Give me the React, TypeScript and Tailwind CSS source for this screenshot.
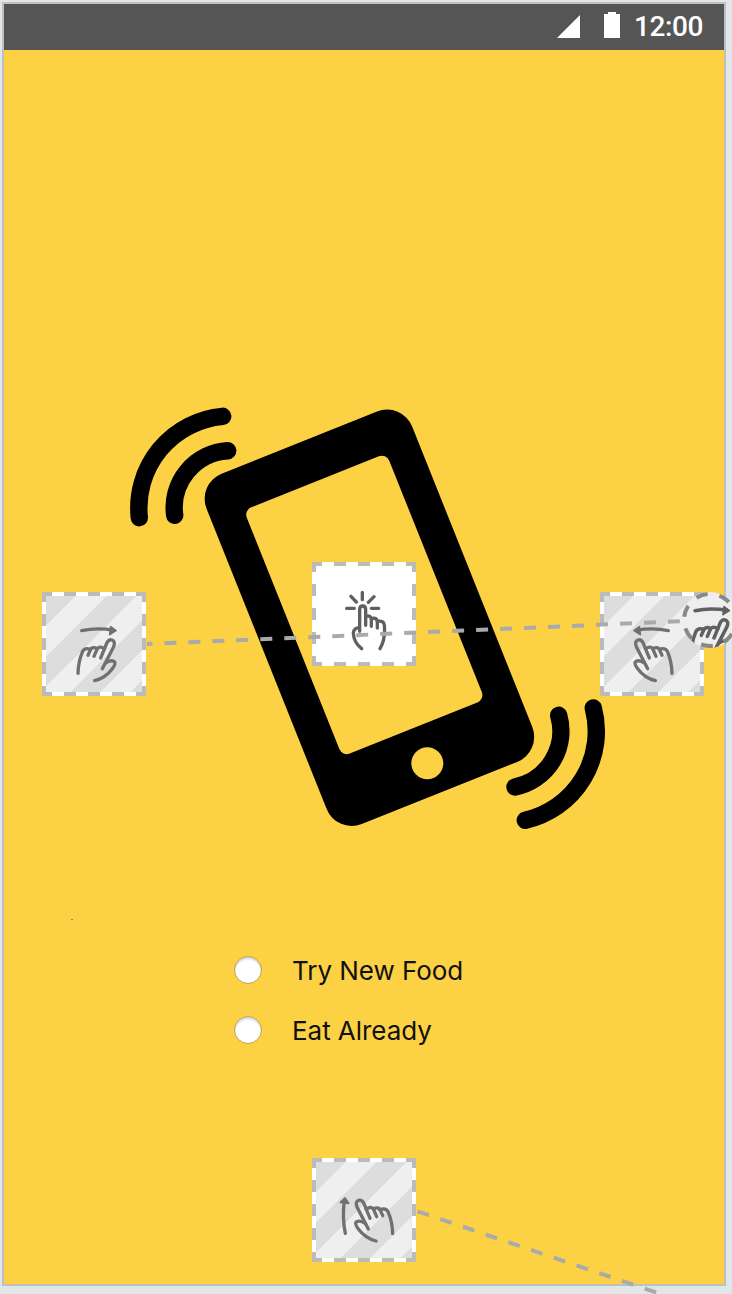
import React from "react";

function DashedBorder() {
  return (
    <svg className="absolute inset-0" width="104" height="104" fill="none">
      <path d="M0 2H104M0 102H104M2 0V104M102 0V104" stroke="#ffffff" strokeWidth="4" />
      <path
        d="M0 2H104M0 102H104M2 0V104M102 0V104"
        stroke="#bbbbbb"
        strokeWidth="4"
        strokeDasharray="12 12"
        strokeDashoffset="2"
      />
    </svg>
  );
}

function SwipeHand() {
  return (
    <g>
      <path d="M179 266L145 200Q139 184 150 180Q160 177 166 190L184 234" />
      <path d="M172 206Q190 196 195 208L204 229" />
      <path d="M194 206Q210 198 215 210L222 226" />
      <path d="M214 208Q232 202 238 214Q251 243 252 280" />
      <path d="M169 249Q154 238 143 245Q137 251 149 266Q170 294 202 302" />
    </g>
  );
}

function SwipeLeft() {
  return (
    <g>
      <path d="M241 152Q195 142 144 151" />
      <path d="M138 152L154 140L157 164Z" fill="currentColor" strokeWidth="5" />
      <SwipeHand />
    </g>
  );
}

function Hotspot({
  place,
  plain,
  children,
}: {
  place: string;
  plain?: boolean;
  children: React.ReactNode;
}) {
  return (
    <div className={"absolute h-[104px] w-[104px] p-1 " + place}>
      <div
        className={
          plain
            ? "h-24 w-24 bg-white"
            : "h-24 w-24 bg-[repeating-linear-gradient(135deg,#dddddd_0px,#dddddd_21.21px,#efefef_21.21px,#efefef_42.43px)]"
        }
      />
      <DashedBorder />
      <svg
        className="absolute inset-0 text-[#707070] blur-[0.7px]"
        width="104"
        height="104"
        fill="none"
        stroke="currentColor"
        strokeWidth="10"
        strokeLinecap="round"
        strokeLinejoin="round"
      >
        <g transform="scale(.33333) translate(-36 -36)">{children}</g>
      </svg>
    </div>
  );
}

function Choice({ label }: { label: string }) {
  return (
    <label className="flex h-[60px] items-center">
      <span className="h-7 w-7 rounded-full border border-[#b9a25a] bg-white shadow-[inset_0_2px_2px_rgba(0,0,0,0.16)]" />
      <span className="ml-[30px] whitespace-nowrap pt-0.5 text-[26px] leading-8 tracking-[-0.05px] text-[#111111]">
        {label}
      </span>
    </label>
  );
}

export default function App() {
  return (
    <div className="relative h-[1294px] w-[732px] overflow-hidden bg-[#e1e7e9] p-0.5 font-['Inter',sans-serif]">
      <div className="flex h-[1284px] w-[724px] flex-col border-2 border-[#c0c0c0] bg-[#fcd144]">
        <header className="flex h-[46px] shrink-0 items-center justify-end bg-[#555555] pr-[21px] text-white">
          <svg width="64" height="46" fill="white">
            <path d="M0 34H23V11Z" />
            <path d="M47 10H51V8H59V10H63V34H47Z" />
          </svg>
          <span className="ml-[13px] font-['Roboto',sans-serif] text-[28px] font-medium leading-[46px] tracking-[-0.4px]">
            12:00
          </span>
        </header>
        <main className="flex flex-col">
          <svg className="ml-[120px] mt-[350px]" width="490" height="440" viewBox="124 400 490 440" fill="none">
            <g transform="translate(369.4 617.8) rotate(-21.8)">
              <rect x="-110.7" y="-188.7" width="221.4" height="377.4" rx="27" fill="black" />
            </g>
            <g transform="translate(364.3 604.9) rotate(-21.8)">
              <rect x="-76.7" y="-132.6" width="153.4" height="265.2" rx="8" fill="#fcd144" />
            </g>
            <circle cx="427.3" cy="763.2" r="16" fill="#fcd144" />
            <g stroke="black" strokeWidth="17.4" strokeLinecap="round">
              <path d="M222.7 416.3A92.1 92.1 0 0 0 139.3 517.7" />
              <path d="M227.7 450.7A57 57 0 0 0 174.7 515.3" />
              <path d="M593.3 708A91.3 91.3 0 0 1 525.3 820.3" />
              <path d="M558.7 715.3A57.2 57.2 0 0 1 515 787" />
            </g>
          </svg>
          <div className="ml-[67px] mt-[79px] h-px w-0.5 bg-[#9c8748]" />
          <div className="ml-[230px] mt-[20px] flex flex-col">
            <Choice label="Try New Food" />
            <Choice label="Eat Already" />
          </div>
        </main>
      </div>

      <Hotspot place="left-[42px] top-[592px]">
        <g transform="translate(396 0) scale(-1 1)">
          <SwipeLeft />
        </g>
      </Hotspot>
      <Hotspot place="left-[312px] top-[562px]" plain>
        <g className="text-[#606060]" stroke="currentColor">
          <path d="M187 127V149M153 139L169 156M222 140L205 157M140 175H163M214 175H236" />
          <path d="M179 244V179Q179 168 188 168Q197 168 197 179V226" />
          <path d="M197 199Q212 195 214 207V229" />
          <path d="M214 206Q229 202 232 213V234" />
          <path d="M232 214Q252 211 253 225Q257 268 240 296" />
          <path d="M178 233Q162 233 160 249Q161 278 185 296" />
        </g>
      </Hotspot>
      <Hotspot place="left-[600px] top-[592px]">
        <SwipeLeft />
      </Hotspot>
      <Hotspot place="left-[312px] top-[1158px]">
        <path d="M136 262Q126 215 133 165" />
        <path d="M135 156L121 169L146 172Z" fill="currentColor" strokeWidth="5" />
        <g transform="translate(26 -17)">
          <SwipeHand />
        </g>
      </Hotspot>

      <svg className="absolute inset-0" width="732" height="1294" fill="none" stroke="#aaaaaa" strokeWidth="4">
        <path d="M147 644.1L684 621.1" strokeDasharray="12 12" strokeDashoffset="6.6" />
        <path d="M417.5 1211.3L732 1318.3" strokeDasharray="12 12" />
      </svg>

      <svg className="absolute left-[682px] top-[592px] text-[#606060]" width="56" height="56" fill="none">
        <defs>
          <clipPath id="gesture-clip">
            <circle cx="28" cy="28" r="28" />
          </clipPath>
        </defs>
        <circle cx="28" cy="28" r="28" fill="#eeeeee" />
        <g
          clipPath="url(#gesture-clip)"
          stroke="currentColor"
          strokeWidth="10.5"
          strokeLinecap="round"
          strokeLinejoin="round"
        >
          <g transform="scale(.33333) translate(-116 -96) translate(396 0) scale(-1 1)">
            <SwipeLeft />
          </g>
        </g>
        <circle
          cx="28"
          cy="28"
          r="26"
          stroke="#888888"
          strokeWidth="4"
          strokeDasharray="11.6 11.74"
          transform="rotate(32 28 28)"
        />
      </svg>
    </div>
  );
}
